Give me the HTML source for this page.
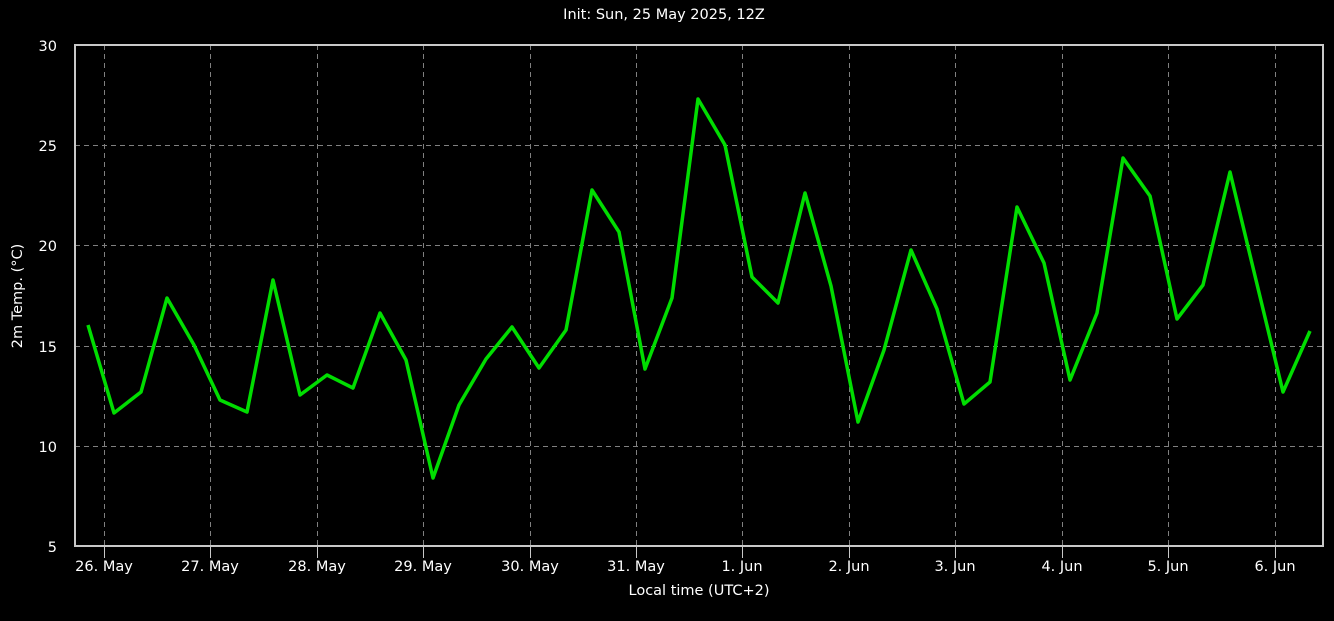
<!DOCTYPE html><html><head><style>body{margin:0;background:#000;}svg{display:block}</style></head><body>
<svg width="1334" height="621" xmlns="http://www.w3.org/2000/svg" font-family="'DejaVu Sans','Liberation Sans',sans-serif" font-size="14.5" fill="#fff">
<text x="664" y="19" text-anchor="middle">Init: Sun, 25 May 2025, 12Z</text>
<g stroke="#808080" stroke-width="1" stroke-dasharray="5,4">
<line x1="75" x2="1324" y1="145.5" y2="145.5"/><line x1="75" x2="1324" y1="245.5" y2="245.5"/><line x1="75" x2="1324" y1="346.5" y2="346.5"/><line x1="75" x2="1324" y1="446.5" y2="446.5"/>
<line x1="104.5" x2="104.5" y1="45" y2="546"/><line x1="210.5" x2="210.5" y1="45" y2="546"/><line x1="317.5" x2="317.5" y1="45" y2="546"/><line x1="423.5" x2="423.5" y1="45" y2="546"/><line x1="530.5" x2="530.5" y1="45" y2="546"/><line x1="636.5" x2="636.5" y1="45" y2="546"/><line x1="742.5" x2="742.5" y1="45" y2="546"/><line x1="849.5" x2="849.5" y1="45" y2="546"/><line x1="955.5" x2="955.5" y1="45" y2="546"/><line x1="1062.5" x2="1062.5" y1="45" y2="546"/><line x1="1168.5" x2="1168.5" y1="45" y2="546"/><line x1="1275.5" x2="1275.5" y1="45" y2="546"/>
</g>
<g stroke="#c8c8c8" stroke-width="1">
<line x1="104.5" x2="104.5" y1="547" y2="558"/><line x1="210.5" x2="210.5" y1="547" y2="558"/><line x1="317.5" x2="317.5" y1="547" y2="558"/><line x1="423.5" x2="423.5" y1="547" y2="558"/><line x1="530.5" x2="530.5" y1="547" y2="558"/><line x1="636.5" x2="636.5" y1="547" y2="558"/><line x1="742.5" x2="742.5" y1="547" y2="558"/><line x1="849.5" x2="849.5" y1="547" y2="558"/><line x1="955.5" x2="955.5" y1="547" y2="558"/><line x1="1062.5" x2="1062.5" y1="547" y2="558"/><line x1="1168.5" x2="1168.5" y1="547" y2="558"/><line x1="1275.5" x2="1275.5" y1="547" y2="558"/>
</g>
<polyline fill="none" stroke="#00dd00" stroke-width="3.5" stroke-linejoin="round" points="88,325 114,413 141,392 167,298 194,345 220,400 247,412 273,280 300,395 327,375 353,388 380,313 406,360 433,478 459,405 486,359 512,327 539,368 566,330 592,190 619,232 645,369 672,298 698,99 725,145 752,277 778,303 805,193 831,286 858,422 884,350 911,250 937,309 964,404 990,382 1017,207 1044,263 1070,380 1097,313 1123,158 1150,196 1177,319 1203,285 1230,172 1256,280 1283,392 1310,331"/>
<rect x="75" y="45" width="1248" height="501" fill="none" stroke="#c8c8c8" stroke-width="2"/>
<g text-anchor="end"><text x="57" y="51">30</text><text x="57" y="151">25</text><text x="57" y="251">20</text><text x="57" y="352">15</text><text x="57" y="452">10</text><text x="57" y="552">5</text></g>
<g text-anchor="middle"><text x="104" y="571">26. May</text><text x="210" y="571">27. May</text><text x="317" y="571">28. May</text><text x="423" y="571">29. May</text><text x="530" y="571">30. May</text><text x="636" y="571">31. May</text><text x="742" y="571">1. Jun</text><text x="849" y="571">2. Jun</text><text x="955" y="571">3. Jun</text><text x="1062" y="571">4. Jun</text><text x="1168" y="571">5. Jun</text><text x="1275" y="571">6. Jun</text>
<text x="699" y="595">Local time (UTC+2)</text>
<text transform="translate(22,296) rotate(-90)">2m Temp. (°C)</text></g>
</svg></body></html>
